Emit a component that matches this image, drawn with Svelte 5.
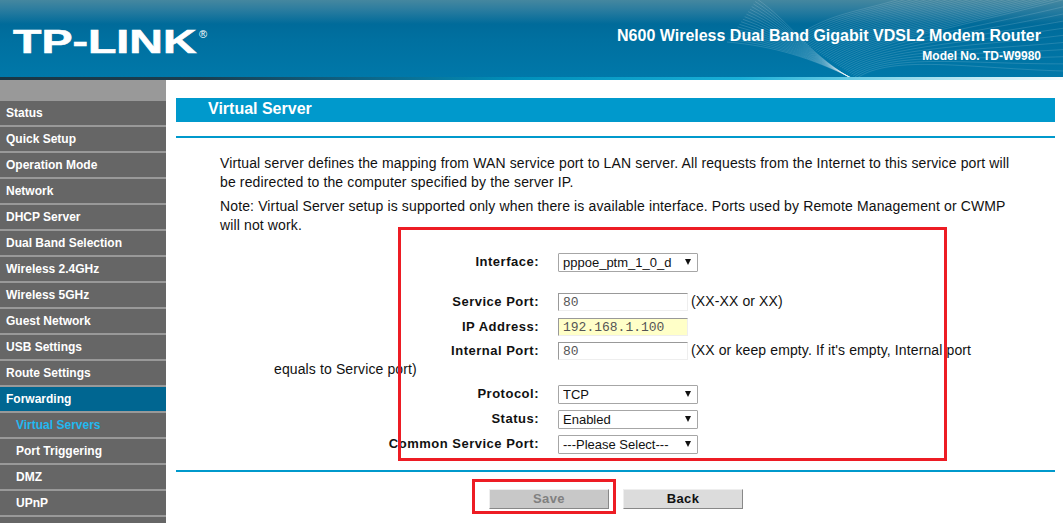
<script>
  const menu = [
    { label: 'Status' },
    { label: 'Quick Setup' },
    { label: 'Operation Mode' },
    { label: 'Network' },
    { label: 'DHCP Server' },
    { label: 'Dual Band Selection' },
    { label: 'Wireless 2.4GHz' },
    { label: 'Wireless 5GHz' },
    { label: 'Guest Network' },
    { label: 'USB Settings' },
    { label: 'Route Settings' },
    { label: 'Forwarding', open: true },
    { label: 'Virtual Servers', sub: true, current: true },
    { label: 'Port Triggering', sub: true },
    { label: 'DMZ', sub: true },
    { label: 'UPnP', sub: true },
    { label: '' }
  ];

  // the fine lines in the banner artwork
  const fan = Array.from({ length: 18 }, (_, i) => {
    const t = i / 17;
    return `M${757 - 30 * t} ${-1 + 43 * t} C${790 - 15 * t} ${22 + 24 * t} ${805 + 5 * t} ${50 + 8 * t} ${850 + 2 * t} 78`;
  });
  const rise = Array.from({ length: 34 }, (_, i) => {
    const t = i / 33;
    const sx = 795 + 62 * t;
    const sy = 37 + 41 * t;
    const u = t * 236;
    const ex = u < 164 ? 900 + u : 1064;
    const ey = u < 164 ? -1 : u - 165;
    return `M${sx} ${sy} C${sx + 35} ${sy - 24} ${(sx + ex) / 2 + 10} ${(sy + ey) / 2 - 6} ${ex} ${ey}`;
  });
</script>

<div class="page">
  <header class="banner">
    <svg class="waves" width="1063" height="77" viewBox="0 0 1063 77" aria-hidden="true">
      {#each fan as d}<path {d} />{/each}
      {#each rise as d}<path class="thin" {d} />{/each}
    </svg>
    <div class="logo"><span class="logo-text">TP-LINK</span><span class="reg">®</span></div>
    <div class="product">
      <div class="name">N600 Wireless Dual Band Gigabit VDSL2 Modem Router</div>
      <div class="model">Model No. TD-W9980</div>
    </div>
  </header>
  <div class="strip"></div>

  <div class="body">
    <nav class="side">
      {#each menu as item}
        <div class="item" class:open={item.open} class:sub={item.sub} class:current={item.current}>{item.label}</div>
      {/each}
    </nav>

    <main class="content">
      <h1>Virtual Server</h1>
      <div class="rule first"></div>

      <p class="intro">Virtual server defines the mapping from WAN service port to LAN server. All requests from the Internet to this service port will be redirected to the computer specified by the server IP.</p>
      <p class="note">Note: Virtual Server setup is supported only when there is available interface. Ports used by Remote Management or CWMP will not work.</p>

      <form class="form">
        <div class="row interface">
          <label for="iface">Interface:</label><span class="pick"><select id="iface"><option>pppoe_ptm_1_0_d</option></select></span>
        </div>
        <div class="row">
          <label for="sport">Service Port:</label><input id="sport" value="80" /><span class="hint">(XX-XX or XX)</span>
        </div>
        <div class="row">
          <label for="ip">IP Address:</label><input id="ip" class="filled" value="192.168.1.100" />
        </div>
        <div class="row wrap">
          <label for="iport">Internal Port:</label><input id="iport" value="80" /><span class="hint">(XX or keep empty. If it's empty, Internal port equals to Service port)</span>
        </div>
        <div class="row">
          <label for="proto">Protocol:</label><span class="pick"><select id="proto"><option>TCP</option></select></span>
        </div>
        <div class="row">
          <label for="state">Status:</label><span class="pick"><select id="state"><option>Enabled</option></select></span>
        </div>
        <div class="row">
          <label for="common">Common Service Port:</label><span class="pick"><select id="common"><option>---Please Select---</option></select></span>
        </div>
      </form>

      <div class="rule last"></div>
      <div class="actions">
        <button type="button" disabled>Save</button>
        <button type="button">Back</button>
      </div>
    </main>
  </div>

  <div class="mark form-mark"></div>
  <div class="mark save-mark"></div>
</div>

<style>
  :global(body) {
    margin: 0;
    background: #fff;
  }

  .page {
    position: relative;
    height: 523px;
    overflow: hidden;
    font-family: "Liberation Sans", Arial, sans-serif;
    color: #111;
  }

  .banner {
    position: relative;
    height: 77px;
    display: flex;
    justify-content: space-between;
    background: linear-gradient(#45879f 0, #2a7c9f 10px, #006b9a 24px, #0070a0 40px, #0078a9 77px);
    color: #fff;
  }

  .waves {
    position: absolute;
    left: 0;
    top: 0;
  }

  .waves path {
    fill: none;
    stroke: #fff;
    stroke-width: 0.5;
    opacity: 0.3;
  }

  .waves path.thin {
    stroke-width: 0.7;
    opacity: 0.2;
  }

  .logo {
    position: relative;
    margin: 23px 0 0 13px;
    display: flex;
    align-items: flex-start;
  }

  .logo-text {
    display: block;
    width: 185px;
    font-size: 33px;
    line-height: 38px;
    font-weight: bold;
    transform: scaleX(1.41);
    transform-origin: left top;
    -webkit-text-stroke: 0.6px #fff;
    white-space: nowrap;
  }

  .reg {
    font-size: 11px;
    line-height: 12px;
    margin: 5px 0 0 1px;
  }

  .product {
    position: relative;
    padding: 27px 22px 0 0;
    text-align: right;
    font-weight: bold;
  }

  .name {
    font-size: 16px;
    line-height: 18px;
  }

  .model {
    margin-top: 4px;
    font-size: 12px;
    line-height: 14px;
  }

  .strip {
    height: 3px;
    background: linear-gradient(90deg, #1a3644 0, #1a3e50 200px, #0f5f80 340px, #0090bb 520px, #1ab0d8 740px, #90d8ea 900px, #f5fbfd 1063px);
  }

  .body {
    display: flex;
    align-items: flex-start;
  }

  .side {
    flex: none;
    width: 166px;
    height: 443px;
    padding-top: 21px;
    box-sizing: border-box;
    background: #999;
    display: flex;
    flex-direction: column;
    gap: 2px;
  }

  .item {
    flex: none;
    height: 24px;
    padding-left: 6px;
    background: #666;
    color: #fff;
    font-size: 12px;
    font-weight: bold;
    line-height: 25px;
  }

  .item.open {
    background: #006691;
  }

  .item.sub {
    padding-left: 16px;
  }

  .item.current {
    color: #22b8f0;
  }

  .content {
    flex: 1;
    min-width: 0;
    padding: 18px 8px 0 10px;
  }

  h1 {
    margin: 0;
    height: 24px;
    padding-left: 32px;
    background: #0099cc;
    color: #fff;
    font-size: 16px;
    line-height: 21px;
    font-weight: bold;
  }

  .rule {
    height: 2px;
    background: #0099cc;
  }

  .rule.first {
    margin-top: 14px;
  }

  .rule.last {
    margin-top: 14px;
  }

  p {
    margin: 0;
    padding-left: 44px;
    width: 792px;
    font-size: 14px;
    line-height: 19px;
    letter-spacing: 0.13px;
  }

  .intro {
    margin-top: 16px;
  }

  .note {
    margin-top: 5px;
  }

  .form {
    margin: 10px 0 0 98px;
    width: 700px;
    font-size: 14px;
    letter-spacing: 0.12px;
  }

  .row {
    min-height: 25px;
    line-height: 25px;
  }

  .row.interface {
    margin-top: 14px;
    margin-bottom: 15px;
  }

  .row.wrap {
    line-height: 19px;
    min-height: 0;
    margin-top: 2px;
    margin-bottom: 2px;
  }

  label {
    display: inline-block;
    width: 265px;
    margin-right: 19px;
    text-align: right;
    font-size: 13px;
    font-weight: bold;
    letter-spacing: 0.5px;
  }

  input {
    width: 130px;
    height: 18px;
    box-sizing: border-box;
    padding: 0 4px;
    vertical-align: middle;
    background: #fff;
    border-style: solid;
    border-width: 1px;
    border-color: #999 #eee #eee #999;
    font-family: "Liberation Mono", monospace;
    font-size: 13px;
    color: #555;
  }

  input.filled {
    background: #ffffc8;
  }

  .hint {
    margin-left: 3px;
  }

  .pick {
    position: relative;
    display: inline-block;
    width: 140px;
    height: 19px;
    vertical-align: middle;
  }

  .pick::after {
    content: "";
    position: absolute;
    right: 7px;
    top: 6px;
    border-style: solid;
    border-width: 6px 3px 0;
    border-color: #111 transparent transparent;
    pointer-events: none;
  }

  select {
    display: block;
    width: 100%;
    height: 100%;
    box-sizing: border-box;
    padding: 0 0 0 4px;
    margin: 0;
    appearance: none;
    background: #fff;
    border: 1px solid #a6a6a6;
    border-radius: 1px;
    font-family: "Liberation Sans", Arial, sans-serif;
    font-size: 13px;
    color: #111;
  }

  .actions {
    display: flex;
    gap: 14px;
    margin: 17px 0 0 313px;
  }

  button {
    width: 120px;
    height: 20px;
    padding: 0 0 2px;
    background: #dcdcdc;
    border-style: solid;
    border-width: 1px;
    border-color: #eee #888 #888 #eee;
    font-family: "Liberation Sans", Arial, sans-serif;
    font-size: 13px;
    font-weight: bold;
    letter-spacing: 0.4px;
    color: #111;
  }

  button:disabled {
    background: #c8c8c8;
    color: #808080;
  }

  /* red boxes drawn over the screenshot */
  .mark {
    position: absolute;
    box-sizing: border-box;
    border: 3px solid #ed1c24;
    pointer-events: none;
  }

  .form-mark {
    left: 398px;
    top: 227px;
    width: 549px;
    height: 234px;
  }

  .save-mark {
    left: 472px;
    top: 479px;
    width: 144px;
    height: 35px;
  }
</style>
